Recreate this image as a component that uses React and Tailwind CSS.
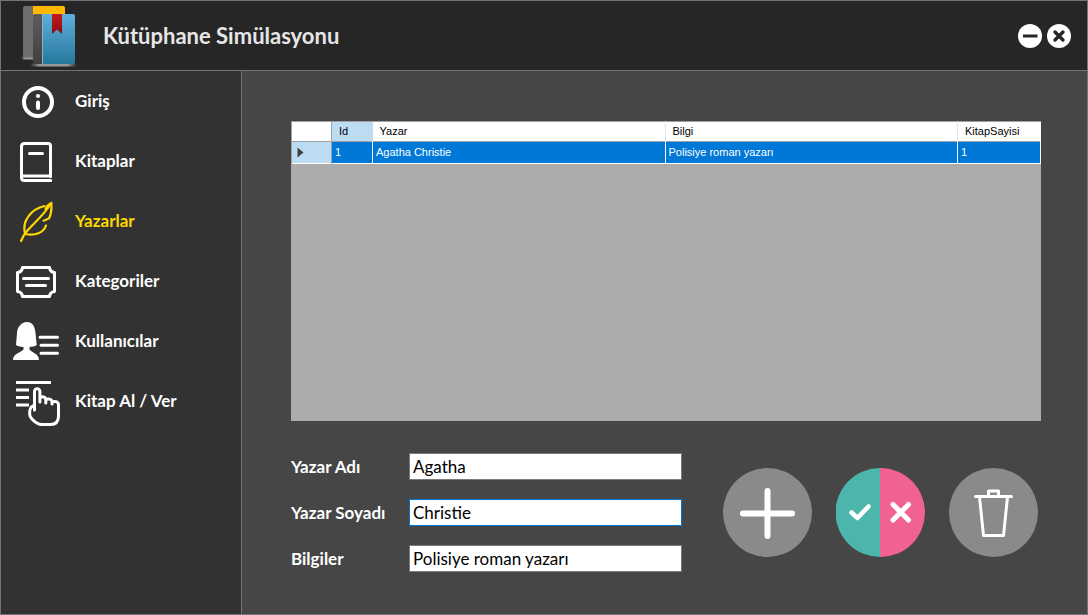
import { useState } from "react";

function LogoIcon() {
  return (
    <svg width="58" height="63" viewBox="0 3 58 63" aria-hidden="true">
      <defs>
        <linearGradient id="cover" x1="0" y1="0" x2="0" y2="1">
          <stop offset="0" stopColor="#5fafde" />
          <stop offset="1" stopColor="#27789c" />
        </linearGradient>
        <linearGradient id="spine" x1="0" y1="0" x2="0" y2="1">
          <stop offset="0" stopColor="#5c5c5c" />
          <stop offset="1" stopColor="#3f3f3f" />
        </linearGradient>
        <linearGradient id="ribbon" x1="0" y1="0" x2="0" y2="1">
          <stop offset="0" stopColor="#c01a1c" />
          <stop offset="1" stopColor="#8c0f12" />
        </linearGradient>
        <linearGradient id="shade" x1="0" y1="0" x2="1" y2="0">
          <stop offset="0" stopColor="#999" stopOpacity="0" />
          <stop offset="0.2" stopColor="#999" />
          <stop offset="0.8" stopColor="#999" />
          <stop offset="1" stopColor="#999" stopOpacity="0" />
        </linearGradient>
      </defs>
      <rect x="0" y="55.500" width="20" height="3" rx="1.500" fill="url(#shade)" />
      <path d="M12 5H4Q2 5 2 7V56.500H12Z" fill="#6e6e6e" />
      <path d="M12 5H42Q44 5 44 7V14H12Z" fill="#ffb900" />
      <rect x="9" y="62.500" width="47" height="3" rx="1.500" fill="url(#shade)" />
      <path d="M22 13H14Q12 13 12 15V63H22Z" fill="url(#spine)" />
      <path d="M22 13H52Q54 13 54 15V61Q54 63 52 63H22Z" fill="url(#cover)" />
      <path d="M21.500 13V63" stroke="#8fb4c6" />
      <path d="M31 13H41V33L36 28.500L31 33Z" fill="url(#ribbon)" />
    </svg>
  );
}

function NavSvg({ children }) {
  return (
    <svg
      width="60"
      height="60"
      viewBox="0 0 60 60"
      fill="none"
      stroke="currentColor"
      strokeWidth="3"
      strokeLinecap="round"
      strokeLinejoin="round"
      aria-hidden="true"
      className="shrink-0"
    >
      {children}
    </svg>
  );
}

const icons = {
  info: (
    <NavSvg>
      <circle cx="37" cy="31" r="14" strokeWidth="4" />
      <circle cx="37" cy="25" r="2.100" fill="currentColor" stroke="none" />
      <path d="M37 31.500V37" strokeWidth="4" />
    </NavSvg>
  ),
  book: (
    <NavSvg>
      <path d="M49.500 45.500V15Q49.500 12.500 47 12.500H23.500Q20.500 12.500 20.500 15.500V46.500Q20.500 49.500 23.500 49.500H49.700" />
      <path d="M21 45H49.500" />
      <path d="M28.500 22.500H41.500" />
    </NavSvg>
  ),
  feather: (
    <NavSvg>
      <g strokeWidth="2.200">
        <path d="M20 50C21.500 46 23 43.500 26 40C34 31 43 24 50.300 12" />
        <path d="M43.500 15C31 18 20.500 29 24 42.500" />
        <path d="M24.500 43C34 45 42.500 42 45 34.500" />
        <path d="M50.300 12C47.500 13.500 45.500 15 44.500 18M50.300 12C50.800 18 50 23.500 48 27.500C46 28 45 29 42.500 29.700" />
      </g>
    </NavSvg>
  ),
  ticket: (
    <NavSvg>
      <path d="M21.500 16.500H48.500Q49 21 53.500 21.500V40.500Q49 41 48.500 45.500H21.500Q21 41 16.500 40.500V21.500Q21 21 21.500 16.500Z" />
      <path d="M22.500 27.500H47.500M25.500 34.500H44.500" />
    </NavSvg>
  ),
  user: (
    <NavSvg>
      <path
        d="M26 11C20 11.500 16.500 16 16 22L15 34C17 35.500 20 35.500 22.500 36V38.500C20 41.500 12 42.500 12 49H38C38 42.500 30.500 41.500 28.500 38.500V36C31 35.500 34 35.500 35.700 34L34.500 22C34 15.500 31.500 11 26 11Z"
        fill="currentColor"
        stroke="none"
      />
      <path d="M39 26.300H56.500M40 34.300H56.500M40 42.300H56.500" />
    </NavSvg>
  ),
  hand: (
    <NavSvg>
      <path d="M15 11.500H50M15 19H28M15 26.500H28M15 34H28" strokeLinecap="butt" />
      <path d="M33.500 39V20.500a2.700 2.700 0 0 1 5.400 0V31M38.900 27C40.500 25 44.800 25.500 44.800 29V32M44.800 29C46.500 27.500 51 27.500 51 31V33M51 31.500C53.500 29.500 57.500 30.500 57.500 34V45C57.500 50.500 54.500 53.500 49.500 53.500H40.500C36 53.500 28.700 47 28.700 43.500V40.500C28.700 36.500 31.500 34.500 33.500 34.500" />
    </NavSvg>
  ),
};

const nav = [
  { label: "Giriş", icon: "info" },
  { label: "Kitaplar", icon: "book" },
  { label: "Yazarlar", icon: "feather" },
  { label: "Kategoriler", icon: "ticket" },
  { label: "Kullanıcılar", icon: "user" },
  { label: "Kitap Al / Ver", icon: "hand" },
];

function TextField({ id, label, value, onChange }) {
  return (
    <div className="flex items-center">
      <label htmlFor={id} className="w-[118px] shrink-0 text-[17px] leading-6 font-bold text-white">
        {label}
      </label>
      <input
        id={id}
        type="text"
        value={value}
        onChange={(e) => onChange(e.target.value)}
        className={`h-[27px] w-full min-w-0 border bg-white px-[3px] text-[17px] text-black outline-none ${
          id === "soyad" ? "border-[#0078d7]" : "border-[#7a7a7a]"
        }`}
      />
    </div>
  );
}

export default function App() {
  const [active, setActive] = useState("Yazarlar");
  const [ad, setAd] = useState("Agatha");
  const [soyad, setSoyad] = useState("Christie");
  const [bilgi, setBilgi] = useState("Polisiye roman yazarı");

  return (
    <div className="flex min-h-screen flex-col border border-[#737373] bg-[#464646] font-['Century_Gothic',Lato,sans-serif]">
      <header className="flex h-[70px] items-center border-b border-[#737373] bg-[#262626] pr-4 pl-5">
        <LogoIcon />
        <h1 className="ml-6 flex-1 text-[22px] leading-9 font-bold text-[#e6e6e6]">Kütüphane Simülasyonu</h1>
        <div className="flex gap-[5px]">
          <button type="button" aria-label="Simge durumuna küçült" className="size-6">
            <svg width="24" height="24" viewBox="0 0 24 24" aria-hidden="true">
              <circle cx="12" cy="12" r="12" fill="#fff" />
              <path d="M5 12H19.500" stroke="#262626" strokeWidth="3" />
            </svg>
          </button>
          <button type="button" aria-label="Kapat" className="size-6">
            <svg width="24" height="24" viewBox="0 0 24 24" aria-hidden="true">
              <circle cx="12" cy="12" r="12" fill="#fff" />
              <path d="M8 8L16 16M16 8L8 16" stroke="#262626" strokeWidth="3.400" strokeLinecap="round" />
            </svg>
          </button>
        </div>
      </header>

      <div className="flex flex-1">
        <nav className="w-[241px] shrink-0 border-r border-[#737373] bg-[#323232]">
          <ul>
            {nav.map((item) => (
              <li key={item.label}>
                <button
                  type="button"
                  onClick={() => setActive(item.label)}
                  className={`flex h-[60px] w-full items-center gap-[14px] text-left text-[17px] leading-6 font-bold ${
                    active === item.label ? "text-[#ffd800]" : "text-white"
                  }`}
                >
                  {icons[item.icon]}
                  {item.label}
                </button>
              </li>
            ))}
          </ul>
        </nav>

        <main className="flex min-w-0 flex-1 flex-col pt-[50px] pr-[46px] pb-[42px] pl-[49px]">
          <div className="flex-1 bg-[#ababab]">
            <table className="w-full table-fixed border-collapse font-['Liberation_Sans',sans-serif] text-[11px] leading-none">
              <colgroup>
                <col className="w-[40px]" />
                <col className="w-[41px]" />
                <col />
                <col />
                <col className="w-[83px]" />
              </colgroup>
              <thead>
                <tr className="h-[20px] border-t border-b border-[#a0a0a0] bg-white text-left text-black">
                  <td className="border-r border-l border-[#a0a0a0]" />
                  <th className="bg-[#bcdcf4] pl-[7px] font-normal">Id</th>
                  <th className="border-r border-[#e5e5e5] pl-[7px] font-normal">Yazar</th>
                  <th className="border-r border-[#e5e5e5] pl-[7px] font-normal">Bilgi</th>
                  <th className="pl-[7px] font-normal">KitapSayisi</th>
                </tr>
              </thead>
              <tbody>
                <tr className="h-[22px] border-b border-white bg-[#0078d7] text-white">
                  <td className="border-r border-l border-[#a0a0a0] bg-[#bcdcf4] pl-[5px]">
                    <svg width="7" height="11" viewBox="0 0 7 11" aria-hidden="true">
                      <path d="M0.500 0.500L6.500 5.500L0.500 10.500Z" fill="#404040" />
                    </svg>
                  </td>
                  <td className="border-r border-white pl-[3px]">1</td>
                  <td className="border-r border-white pl-[3px]">Agatha Christie</td>
                  <td className="border-r border-white pl-[3px]">Polisiye roman yazarı</td>
                  <td className="border-r border-white pl-[3px]">1</td>
                </tr>
              </tbody>
            </table>
          </div>

          <div className="mt-8 flex items-center justify-between pr-[3px]">
            <form className="mr-10 flex max-w-[391px] flex-1 flex-col gap-[19px]">
              <TextField id="ad" label="Yazar Adı" value={ad} onChange={setAd} />
              <TextField id="soyad" label="Yazar Soyadı" value={soyad} onChange={setSoyad} />
              <TextField id="bilgi" label="Bilgiler" value={bilgi} onChange={setBilgi} />
            </form>
            <div className="flex shrink-0 gap-6">
              <button type="button" aria-label="Ekle" className="size-[89px]">
                <svg width="89" height="89" viewBox="0 0 89 89" aria-hidden="true">
                  <circle cx="44.500" cy="44.500" r="44.500" fill="#8a8a8a" />
                  <path d="M44.500 23V68M20 45.500H69" stroke="#fff" strokeWidth="6" strokeLinecap="round" />
                </svg>
              </button>
              <button type="button" aria-label="Güncelle" className="size-[89px]">
                <svg width="89" height="89" viewBox="0 0 89 89" aria-hidden="true">
                  <path d="M44 0A44.500 44.500 0 0 0 44 89Z" fill="#4db6ac" />
                  <path d="M44 0H44.500A44.500 44.500 0 0 1 44.500 89H44Z" fill="#f06292" />
                  <path d="M15.500 44.500L21.500 50L32.500 38.500" fill="none" stroke="#fff" strokeWidth="4.500" strokeLinecap="round" strokeLinejoin="round" />
                  <path d="M57 36.500L72.500 52M72.500 36.500L57 52" stroke="#fff" strokeWidth="5" strokeLinecap="round" />
                </svg>
              </button>
              <button type="button" aria-label="Sil" className="size-[89px]">
                <svg width="89" height="89" viewBox="0 0 89 89" aria-hidden="true">
                  <circle cx="44.500" cy="44.500" r="44.500" fill="#8a8a8a" />
                  <g fill="none" stroke="#fff" strokeWidth="3" strokeLinecap="round" strokeLinejoin="round">
                    <path d="M26.500 28.500H62.500M39.500 27V23H49.500V27" />
                    <path d="M30.500 29L34.500 67.500H54.500L58.500 29" />
                  </g>
                </svg>
              </button>
            </div>
          </div>
        </main>
      </div>
    </div>
  );
}
